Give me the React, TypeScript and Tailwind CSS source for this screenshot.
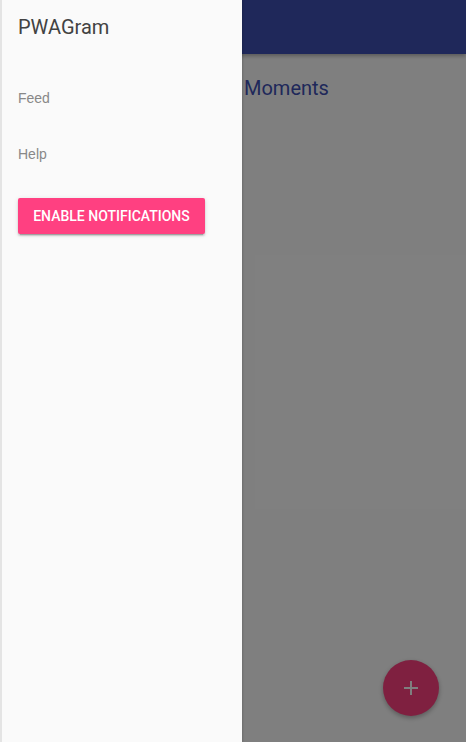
export default function App() {
    return (
        <div className="relative h-[742px] w-[466px] overflow-hidden bg-white font-['Roboto',sans-serif]">
            {/* page behind the drawer */}
            <header className="h-[54px] bg-[#3f51b5] shadow-[0_2px_4px_rgba(0,0,0,0.3)]" />
            <main className="pl-[244px] pt-[20px]">
                <h1 className="text-[20px] leading-[28px] text-[#3f51b5]">Moments</h1>
            </main>
            <button className="absolute bottom-[26px] right-[27px] flex h-[56px] w-[56px] items-center justify-center rounded-full bg-[#ff4081] shadow-[0_2px_5px_rgba(0,0,0,0.3)]">
                <svg width="24" height="24" viewBox="0 0 24 24" fill="white">
                    <path d="M19 13h-6v6h-2v-6H5v-2h6V5h2v6h6v2z" />
                </svg>
            </button>

            {/* overlay */}
            <div className="absolute inset-0 bg-black/50" />

            {/* drawer */}
            <aside className="absolute inset-y-0 left-0 flex w-[242px] flex-col border-l-2 border-[#e4e4e4] bg-[#fafafa] shadow-[1px_0_2px_rgba(0,0,0,0.15)]">
                <div className="pl-[16px] pt-[13px] text-[20px] leading-[28px] text-[#424242]">PWAGram</div>
                <nav className="mt-[29px] flex flex-col font-['Liberation_Sans',sans-serif] text-[14px] text-[#888888]">
                    <a className="py-[16px] pl-[16px] leading-[24px]">Feed</a>
                    <a className="py-[16px] pl-[16px] leading-[24px]">Help</a>
                </nav>
                <div className="pl-[16px] pt-[16px]">
                    <button className="h-[36px] w-[187px] rounded-[2px] bg-[#ff4081] text-[14px] font-medium uppercase text-white shadow-[0_2px_2px_rgba(0,0,0,0.14),0_3px_1px_-2px_rgba(0,0,0,0.2),0_1px_5px_rgba(0,0,0,0.12)]">
                        Enable Notifications
                    </button>
                </div>
            </aside>
        </div>
    );
}
